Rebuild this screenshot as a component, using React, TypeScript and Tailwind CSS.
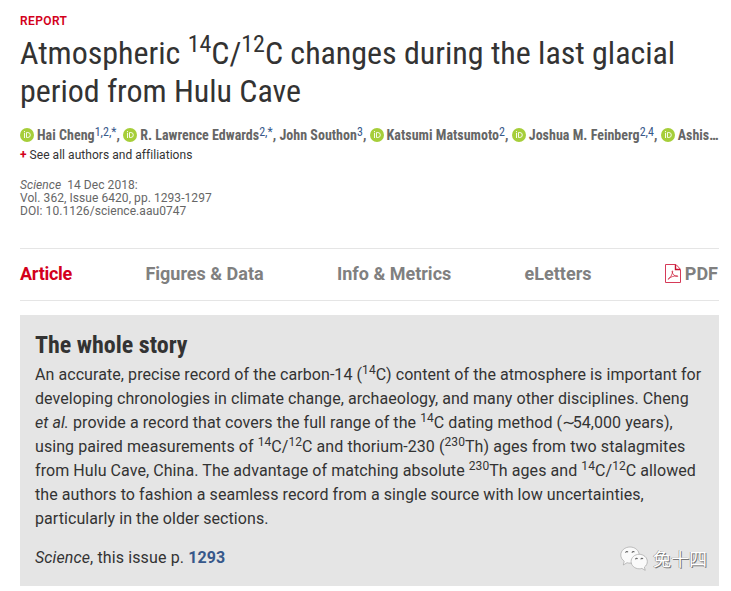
import type { ReactNode } from 'react';

const tabs = ['Article', 'Figures & Data', 'Info & Metrics', 'eLetters'];

const authors = [
  { name: 'Hai Cheng', refs: '1,2,*', orcid: true },
  { name: 'R. Lawrence Edwards', refs: '2,*', orcid: true },
  { name: 'John Southon', refs: '3', orcid: false },
  { name: 'Katsumi Matsumoto', refs: '2', orcid: true },
  { name: 'Joshua M. Feinberg', refs: '2,4', orcid: true },
];

function Sup({ children }: { children: ReactNode }) {
  return <sup className="static align-[0.48em] text-[75%] leading-[0]">{children}</sup>;
}

function OrcidIcon() {
  return (
    <svg viewBox="0 0 14 14" className="mr-[3px] inline-block h-3.5 w-3.5 align-[-2px]">
      <circle cx="7" cy="7" r="7" fill="#a6ce39" />
      <path d="M4.5 4.9v5.1M6.5 4.5h1.3a2.5 2.5 0 0 1 0 5H6.5z" fill="none" stroke="#fff" strokeWidth=".9" />
      <circle cx="4.5" cy="3.6" r=".6" fill="#fff" />
    </svg>
  );
}

function PdfIcon() {
  return (
    <svg viewBox="0 0 16 19" className="h-[19px] w-4" fill="none" stroke="#c8102e">
      <path d="M.5.5h10.5l4.5 4.8v13.2H.5z" stroke="#d63a58" />
      <path d="M10.5 1v4.5H15" strokeWidth="1.4" />
      <path
        d="M3.3 15.3c1.8-1.1 4-4.5 4.4-8 .1-.7-.7-.6-.6.2.3 2.4 2.2 4.8 5.2 5 .8 0 .8-.7-.1-.7-3 0-6.2 1-8.5 2.6-.6.5-.8 1.1-.4.9z"
        strokeWidth=".7"
      />
    </svg>
  );
}

function WeChatIcon() {
  return (
    <svg viewBox="0 0 28 25" className="h-[25px] w-7" stroke="#999" strokeWidth=".6">
      <path
        d="M10 1C4.9 1 .8 4.5.8 9c0 2.6 1.3 4.7 3.4 6.2L3.3 19l3.7-2.3c1 .3 2 .4 3 .4 5.1 0 9.2-3.6 9.2-8.1S15.1 1 10 1z"
        fill="#fafafa"
      />
      <path
        d="M19.2 8.3c-4.5 0-8.1 3.2-8.1 7.2s3.6 7.3 8.1 7.3c1 0 1.8-.1 2.7-.4l3.3 1.9-.8-3.2c1.8-1.3 2.9-3.2 2.9-5.5 0-4-3.6-7.3-8.1-7.3z"
        fill="#fafafa"
      />
      <path
        d="M5.8 6.8a1.1 1.1 0 0 1 2.1-.6M12.2 6.8a1.1 1.1 0 0 1 2.1-.6M15.6 13.4a1 1 0 0 1 1.9-.5M21 13.4a1 1 0 0 1 1.9-.5"
        fill="none"
        stroke="#666"
        strokeWidth="1.1"
      />
    </svg>
  );
}

export default function App() {
  return (
    <main className="flex h-[591px] w-[731px] flex-col gap-3.5 overflow-hidden bg-white pr-3 pl-5 font-['Roboto',sans-serif] text-[#333]">
      <div>
        <header className="flex h-[248px] flex-col gap-4 pt-3.5">
          <div className="flex flex-col gap-1.5">
            <p className="text-[12px] leading-[14px] font-semibold tracking-[0.4px] text-[#d3001b]">REPORT</p>
            <h1 className="h-[76px] font-['Roboto_Condensed',sans-serif] text-[32px] leading-[38.4px] font-normal tracking-[-0.02px] whitespace-nowrap">
              Atmospheric <Sup>14</Sup>C/<Sup>12</Sup>C changes during the last glacial
              <br />
              period from Hulu Cave
            </h1>
          </div>

          <div className="flex flex-col gap-px">
            <p className="h-5 font-['Roboto_Condensed',sans-serif] text-[14px] leading-[19px] font-bold tracking-[0.02px] whitespace-nowrap text-[#666]">
              {authors.map((author) => (
                <span key={author.name}>
                  {author.orcid && <OrcidIcon />}
                  {author.name}
                  <sup className="static align-[4px] text-[12px] leading-[0] font-normal text-[#37588a]">
                    {author.refs}
                  </sup>
                  ,{' '}
                </span>
              ))}
              <OrcidIcon />
              Ashis…
            </p>
            <p className="text-[12px] leading-4 tracking-[0.04px] whitespace-nowrap">
              <span className="font-bold text-[#d3001b]">+</span> See all authors and affiliations
            </p>
          </div>

          <div className="text-[12px] leading-[13px] tracking-[0.06px] text-[#666]">
            <p>
              <em>Science</em>&nbsp; 14 Dec 2018:
            </p>
            <p>Vol. 362, Issue 6420, pp. 1293-1297</p>
            <p>DOI: 10.1126/science.aau0747</p>
          </div>
        </header>

        <nav className="flex h-[53px] items-center justify-between border-y border-[#e5e5e5] pb-0.5 text-[18px] font-bold text-[#808080]">
          {tabs.map((tab) => (
            <a key={tab} className={tab === 'Article' ? 'tracking-[-0.25px] text-[#d3001b]' : ''}>
              {tab}
            </a>
          ))}
          <a className="flex items-center gap-1 pr-px">
            <PdfIcon />
            PDF
          </a>
        </nav>
      </div>

      <section className="flex h-[271px] flex-col gap-[15px] bg-[#e5e5e5] px-[15px] pt-4">
        <div className="flex flex-col gap-[3px]">
          <h2 className="font-['Roboto_Condensed',sans-serif] text-[24px] leading-[29px] font-bold">The whole story</h2>
          <p className="text-[16px] leading-6 tracking-[0.07px] whitespace-nowrap">
            An accurate, precise record of the carbon-14 (<Sup>14</Sup>C) content of the atmosphere is important for
            <br />
            developing chronologies in climate change, archaeology, and many other disciplines. Cheng
            <br />
            <em>et al.</em> provide a record that covers the full range of the <Sup>14</Sup>C dating method (
            <span className="tracking-[-2.5px]">∼</span>54,000 years),
            <br />
            using paired measurements of <Sup>14</Sup>C/<Sup>12</Sup>C and thorium-230 (<Sup>230</Sup>Th) ages from two stalagmites
            <br />
            from Hulu Cave, China. The advantage of matching absolute <Sup>230</Sup>Th ages and <Sup>14</Sup>C/<Sup>12</Sup>C allowed
            <br />
            the authors to fashion a seamless record from a single source with low uncertainties,
            <br />
            particularly in the older sections.
          </p>
        </div>
        <div className="flex h-6 items-center justify-between">
          <p className="text-[16px] leading-6 tracking-[0.12px]">
            <em>Science</em>, this issue p. <a className="font-bold text-[#37588a]">1293</a>
          </p>
          <div className="-mr-[3px] flex items-center gap-[5px]">
            <WeChatIcon />
            <span className="font-['Noto_Sans_CJK_SC',sans-serif] text-[18px] leading-6 text-white [text-shadow:1px_1px_0_#777,-0.5px_-0.5px_0_#777]">
              兔十四
            </span>
          </div>
        </div>
      </section>
    </main>
  );
}
